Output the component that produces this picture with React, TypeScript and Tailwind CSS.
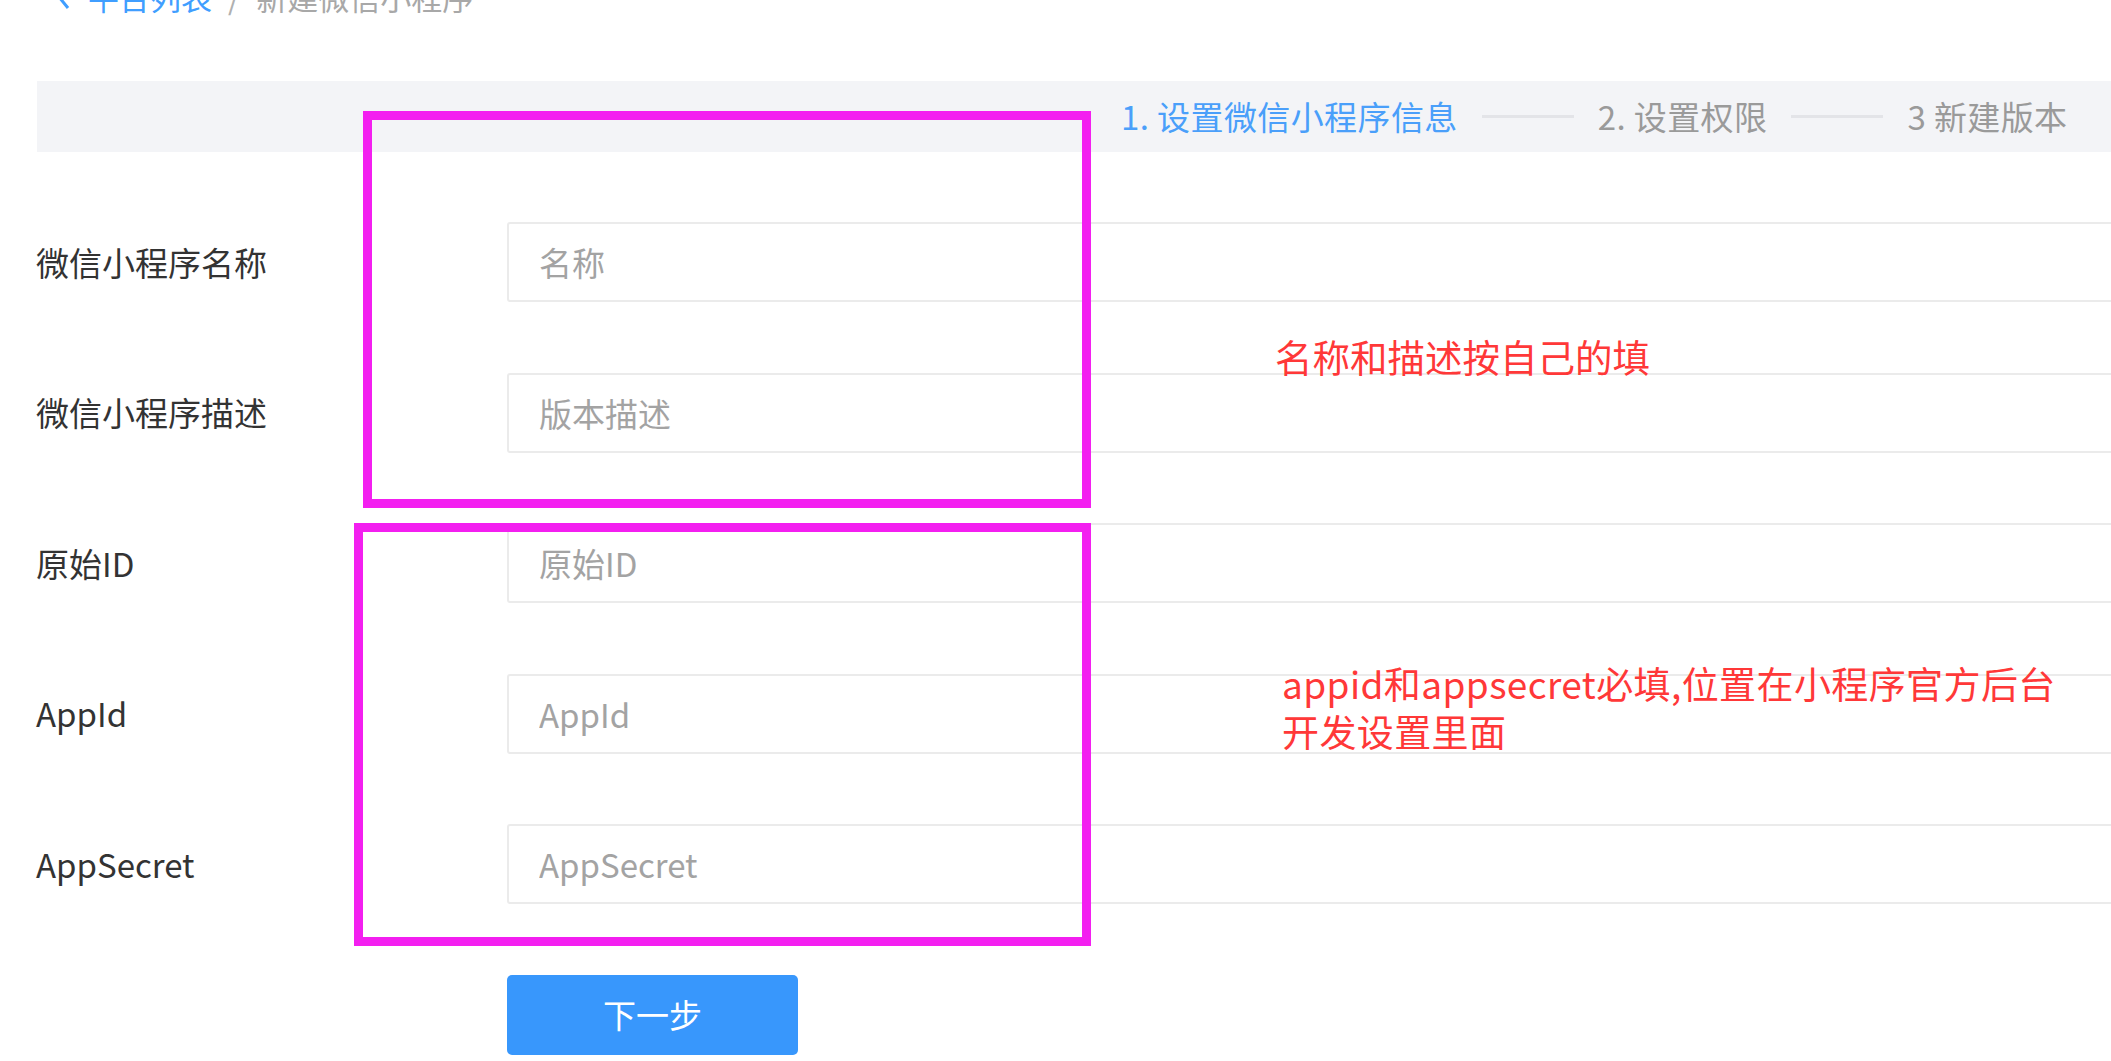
import React from "react";

const rows = [
  { label: "微信小程序名称", placeholder: "名称" },
  { label: "微信小程序描述", placeholder: "版本描述" },
  { label: "原始ID", placeholder: "原始ID" },
  { label: "AppId", placeholder: "AppId" },
  { label: "AppSecret", placeholder: "AppSecret" },
];

export default function App() {
  return (
    <div className="relative w-[2111px] h-[1061px] overflow-hidden bg-white font-['Noto_Sans_CJK_SC',sans-serif]">
      {/* breadcrumb (cut off at top) */}
      <div className="flex items-center h-[32px] mt-[-19px] pl-[56px] text-[31px] leading-[32px] whitespace-nowrap">
        <svg width="14" height="26" viewBox="0 0 14 26" className="mr-[18px]">
          <path d="M12 2 L3 13 L12 24" stroke="#409eff" strokeWidth="3" fill="none" />
        </svg>
        <span className="text-[#409eff]">平台列表</span>
        <span className="text-[#b0b0b0] mx-[16px]">/</span>
        <span className="text-[#a8a8a8]">新建微信小程序</span>
      </div>

      {/* steps bar */}
      <div className="ml-[37px] mt-[68px] h-[71px] w-[2200px] bg-[#f3f4f7] flex items-center">
        <div className="flex items-center ml-[1084px] text-[33px] leading-none whitespace-nowrap tracking-[0.4px]">
          <span className="text-[#4a9ffa]">1. 设置微信小程序信息</span>
          <span className="mx-[24px] w-[92px] h-[3px] bg-[#e3e4e8]" />
          <span className="text-[#9a9a9a]">2. 设置权限</span>
          <span className="mx-[24px] w-[92px] h-[3px] bg-[#e3e4e8]" />
          <span className="text-[#9a9a9a]">3 新建版本</span>
        </div>
      </div>

      {/* form */}
      <div className="mt-[70px] flex flex-col gap-[70.5px] w-[2400px]">
        {rows.map((r) => (
          <div key={r.label} className="flex items-center h-[80px]">
            <div className="w-[471px] ml-[36px] text-[33px] text-[#333333] leading-none whitespace-nowrap">
              {r.label}
            </div>
            <input
              readOnly
              placeholder={r.placeholder}
              className="w-[1800px] h-[80px] border-2 border-[#ebebeb] rounded-[3px] pl-[30px] text-[33px] outline-none placeholder:text-[#a3a3a3] bg-white"
            />
          </div>
        ))}
        <div className="flex">
          <button className="ml-[507px] w-[291px] h-[80px] bg-[#3897fc] rounded-[5px] text-white text-[33px] leading-none">
            下一步
          </button>
        </div>
      </div>

      {/* annotation overlays */}
      <div className="absolute left-[363px] top-[111px] w-[728px] h-[397px] border-[9.5px] border-[#f31ff0]" />
      <div className="absolute left-[354px] top-[523px] w-[737px] h-[423px] border-[9.5px] border-[#f31ff0]" />
      <div className="absolute left-[1275px] top-[332px] text-[37.5px] leading-[48px] text-[#ff3838] whitespace-nowrap">
        名称和描述按自己的填
      </div>
      <div className="absolute left-[1282px] top-[659px] text-[37px] leading-[48px] text-[#ff3838] whitespace-nowrap tracking-[0.4px]">
        appid和appsecret必填,位置在小程序官方后台
        <br />
        开发设置里面
      </div>
    </div>
  );
}
